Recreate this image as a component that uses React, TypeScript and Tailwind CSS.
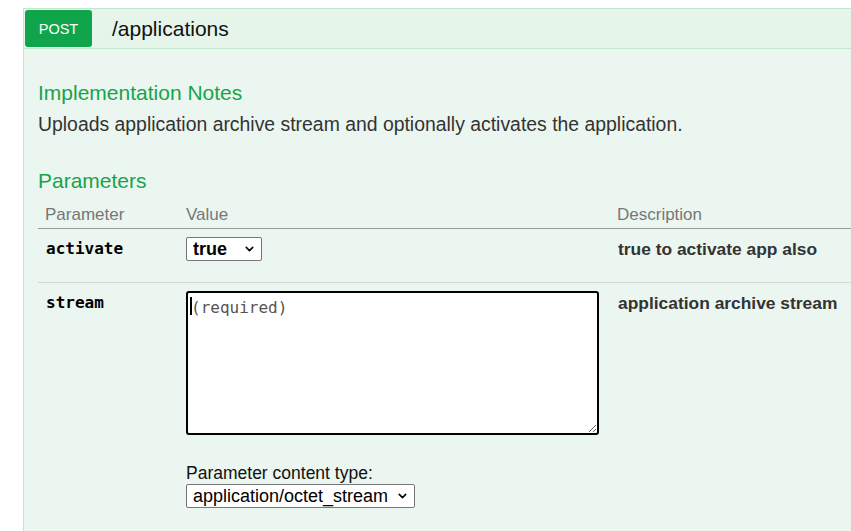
import { ChevronDown } from "lucide-react";

const sans = "font-['Liberation_Sans',Arial,sans-serif]";
const mono = "font-['DejaVu_Sans_Mono',Consolas,monospace]";

function NativeSelect({
  value,
  options,
  className,
  textClass,
}: {
  value: string;
  options: string[];
  className: string;
  textClass: string;
}) {
  return (
    <div className={`relative ${className}`}>
      <select
        defaultValue={value}
        className={`h-full w-full appearance-none rounded-[2px] border border-[#767676] bg-white pl-[6px] text-black outline-none ${textClass}`}
      >
        {options.map((o) => (
          <option key={o}>{o}</option>
        ))}
      </select>
      <ChevronDown
        className="pointer-events-none absolute right-[6px] top-1/2 h-[13px] w-[13px] -translate-y-1/2 text-black"
        strokeWidth={2.8}
      />
    </div>
  );
}

export default function App() {
  return (
    <div className={`h-[531px] w-[851px] overflow-hidden bg-white ${sans}`}>
      <div className="ml-[23px] mt-[8px] min-h-[600px] w-[900px] border-l border-t border-[#bfe8cd] bg-[#ebf6f0]">
        {/* operation header */}
        <div className="flex h-[40px] items-end border-b border-[#bfe8cd] bg-[#e5f5ea]">
          <div className="mb-px ml-px flex h-[37px] w-[67px] items-center justify-center rounded-[3px] bg-[#11a54b] pt-[2px] text-[14.5px] text-white">
            POST
          </div>
          <div className="mb-px flex h-[37px] items-center pl-[20px] pt-[1px] text-[21px] text-[#111]">
            /applications
          </div>
        </div>

        <div className="pl-[14px] pt-[32px]">
          <h4 className="h-[24px] text-[21px] leading-[24px] text-[#18a349]">
            Implementation Notes
          </h4>
          <p className="mt-[8px] h-[22px] text-[19.4px] leading-[22px] text-[#333]">
            Uploads application archive stream and optionally activates the application.
          </p>

          <h4 className="mt-[34px] h-[24px] text-[21px] leading-[24px] text-[#18a349]">
            Parameters
          </h4>

          {/* parameter table */}
          <div className="mt-[8px]">
            <div className="grid h-[28px] grid-cols-[141px_431px_1fr] items-center border-b border-[#9a9a9a] text-[17px] text-[#777]">
              <div className="pl-[7px]">Parameter</div>
              <div className="pl-[7px]">Value</div>
              <div className="pl-[7px]">Description</div>
            </div>

            <div className="grid h-[54px] grid-cols-[141px_431px_1fr] border-b border-[#d3d8d5] pt-[8px]">
              <div className={`pl-[8px] pt-[3px] text-[16px] font-bold leading-[18px] text-black ${mono}`}>
                activate
              </div>
              <div className="pl-[7px]">
                <NativeSelect
                  value="true"
                  options={["true", "false"]}
                  className="h-[24px] w-[76px]"
                  textClass="text-[18px] font-bold leading-[22px]"
                />
              </div>
              <div className="pl-[8px] pt-[2px] text-[17.4px] font-bold leading-[20px] text-[#333]">
                true to activate app also
              </div>
            </div>

            <div className="grid grid-cols-[141px_431px_1fr] pt-[8px]">
              <div className={`pl-[8px] pt-[3px] text-[16px] font-bold leading-[18px] text-black ${mono}`}>
                stream
              </div>
              <div className="pl-[7px]">
                <div className="relative">
                  <textarea
                    placeholder="(required)"
                    className={`block h-[144px] w-[413px] rounded-[3px] border-2 border-black bg-white px-[3px] pt-[4px] text-[16px] leading-[22px] text-black outline-none placeholder:text-[#555] ${mono}`}
                  />
                  {/* text caret of the focused field */}
                  <span className="pointer-events-none absolute left-[4px] top-[6px] h-[18px] w-[2px] bg-black" />
                </div>
                <div className="mt-[29px] text-[17.5px] leading-[18px] text-[#111]">
                  Parameter content type:
                </div>
                <NativeSelect
                  value="application/octet_stream"
                  options={["application/octet_stream"]}
                  className="mt-[2px] h-[24px] w-[229px]"
                  textClass="text-[18px] leading-[22px]"
                />
              </div>
              <div className="pl-[8px] pt-[2px] text-[17.4px] font-bold leading-[20px] text-[#333]">
                application archive stream
              </div>
            </div>
          </div>
        </div>
      </div>
    </div>
  );
}
